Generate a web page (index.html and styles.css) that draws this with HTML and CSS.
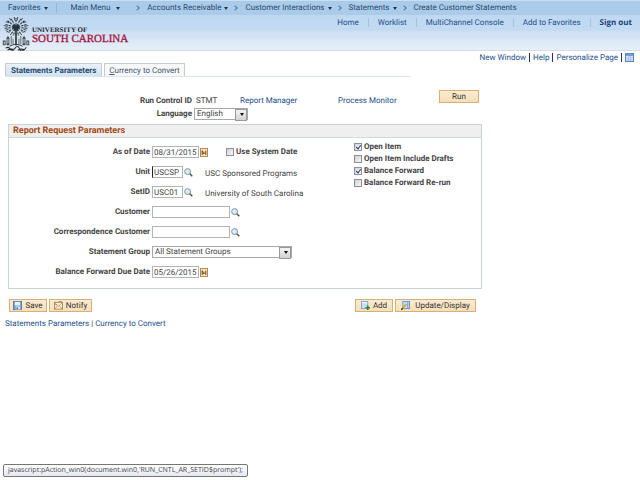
FILE: index.html
```html
<!DOCTYPE html>
<html lang="en">
<head>
    <meta charset="UTF-8">
    <meta name="viewport" content="width=device-width, initial-scale=1.0">
    <title>Create Customer Statements</title>
    <link rel="stylesheet" href="styles.css">
</head>
<body>
    <!-- shared icons -->
    <svg class="sprite" aria-hidden="true">
        <symbol id="lookup" viewBox="0 0 10 10">
            <path d="M6.2 6.2 L9.2 9.2" stroke="#5c5230" stroke-width="1.6"/>
            <circle cx="4" cy="4" r="3.3" fill="#d3ebf8" stroke="#71889c" stroke-width="1"/>
            <path d="M2.6 3.6 Q3 2.5 4.2 2.5" fill="none" stroke="#fff" stroke-width=".8"/>
        </symbol>
        <symbol id="calendar" viewBox="0 0 8 9">
            <rect x=".5" y=".5" width="7" height="8" fill="#f7e3bd" stroke="#b58a55"/>
            <path d="M2.2 2.5V6.8M5.8 2.5V6.8M2.2 3L5.6 6M2.2 5.5H4" fill="none" stroke="#59391e" stroke-width=".9"/>
        </symbol>
    </svg>

    <header class="header">
        <nav class="crumbs">
            <a class="crumb menu favorites" href="#">Favorites</a>
            <a class="crumb menu main-menu" href="#">Main Menu</a>
            <span class="chevron"></span>
            <a class="crumb menu" href="#">Accounts Receivable</a>
            <span class="chevron"></span>
            <a class="crumb menu" href="#">Customer Interactions</a>
            <span class="chevron"></span>
            <a class="crumb menu" href="#">Statements</a>
            <span class="chevron"></span>
            <a class="crumb" href="#">Create Customer Statements</a>
        </nav>
        <div class="banner">
            <div class="logo">
                <svg class="tree" viewBox="0 0 28 36" aria-hidden="true">
                    <g fill="none" stroke="#2b3237">
                        <path d="M13.500 12V30M14.500 12V30" stroke-width=".9"/>
                        <path d="M14 11V1M14 11L9 2M14 11L19 2M14 11L5 4M14 11L23 4M14 11L3 8M14 11L25 8M14 11L2 12M14 11L26 12M14 11L4 16M14 11L24 16M14 11L8 19M14 11L20 19M14 11L11 20M14 11L17 20" stroke-width="1.1" stroke-dasharray="4.500 1.200 2.500 .7"/>
                        <path d="M7 1L9 4M12 0L13 4M16 0L15 4M21 1L19 4M3 5L7 6M25 5L21 6M1 9L5 10M27 9L23 10M3 14L6 13M25 14L22 13M6 17L8 15M22 17L20 15" stroke-width=".9"/>
                        <path d="M7 31Q14 27 21 31" stroke-width="1"/>
                        <path d="M3 33Q6 31 8 34T13 33T18 34T25 32M5 35Q9 33 12 35M16 35Q20 33 23 35" stroke-width="1.1"/>
                    </g>
                    <g fill="#3d444a">
                        <path d="M4 22L5.500 20L7 22V30H4ZM21 22L22.500 20L24 22V30H21Z"/>
                        <path d="M0 25H3V30H0ZM25 25H28V30H25ZM8.500 20H9.300V29H8.500ZM18.700 20H19.500V29H18.700ZM10.500 23H11.300V29H10.500ZM16.700 23H17.500V29H16.700Z"/>
                    </g>
                    <path d="M5.500 23V28M22.500 23V28M1.500 26V29M26.500 26V29" stroke="#dbe7f6" stroke-width="1"/>
                </svg>
                <div class="wordmark">
                    <span class="wordmark-top">UNIVERSITY OF</span>
                    <span class="wordmark-name">SOUTH CAROLINA</span>
                </div>
            </div>
            <nav class="tools">
                <a href="#">Home</a>
                <a href="#">Worklist</a>
                <a href="#">MultiChannel Console</a>
                <a href="#">Add to Favorites</a>
                <a class="sign-out" href="#">Sign out</a>
            </nav>
        </div>
    </header>

    <nav class="page-links">
        <a href="#">New Window</a>
        <a href="#">Help</a>
        <a href="#">Personalize Page</a>
        <a href="#" aria-label="http">
            <svg class="grid-icon" viewBox="0 0 9 9" aria-hidden="true">
                <rect x=".5" y=".5" width="8" height="8" fill="#d5e4f7" stroke="#5b86c4"/>
                <path d="M1 2H8" stroke="#5b86c4" stroke-width="1.5"/>
                <path d="M3.500 3V8M5.500 3V8M1 5H8M1 7H8" stroke="#9bbbe4" stroke-width=".6"/>
            </svg>
        </a>
    </nav>

    <main class="page">
        <div class="tabs">
            <button class="tab active" type="button">Statements Parameters</button>
            <button class="tab" type="button"><u>C</u>urrency to Convert</button>
        </div>

        <form class="content">
            <div class="run">
                <div class="run-fields">
                    <div class="run-row">
                        <span class="run-label">Run Control ID</span>
                        <span class="run-id">STMT</span>
                        <a class="report" href="#">Report Manager</a>
                        <a href="#">Process Monitor</a>
                    </div>
                    <div class="run-row">
                        <label class="run-label" for="language">Language</label>
                        <span class="select language"><select id="language"><option>English</option></select></span>
                    </div>
                </div>
                <button class="btn run-btn" type="button">Run</button>
            </div>

            <section class="panel">
                <h2>Report Request Parameters</h2>
                <div class="panel-body">
                    <div class="fields">
                        <div class="field">
                            <label for="as-of">As of Date</label>
                            <input class="text date" id="as-of" type="text" value="08/31/2015">
                            <svg class="cal"><use href="#calendar"/></svg>
                            <span class="check system-date"><input type="checkbox" id="sysdate"><label for="sysdate">Use System Date</label></span>
                        </div>
                        <div class="field">
                            <label for="unit">Unit</label>
                            <input class="text code focused" id="unit" type="text" value="USCSP">
                            <svg class="look"><use href="#lookup"/></svg>
                            <span class="desc">USC Sponsored Programs</span>
                        </div>
                        <div class="field">
                            <label for="setid">SetID</label>
                            <input class="text code" id="setid" type="text" value="USC01">
                            <svg class="look"><use href="#lookup"/></svg>
                            <span class="desc">University of South Carolina</span>
                        </div>
                        <div class="field">
                            <label for="customer">Customer</label>
                            <input class="text wide" id="customer" type="text">
                            <svg class="look"><use href="#lookup"/></svg>
                        </div>
                        <div class="field">
                            <label for="corr">Correspondence Customer</label>
                            <input class="text wide" id="corr" type="text">
                            <svg class="look"><use href="#lookup"/></svg>
                        </div>
                        <div class="field">
                            <label for="group">Statement Group</label>
                            <span class="select group"><select id="group"><option>All Statement Groups</option></select></span>
                        </div>
                        <div class="field">
                            <label for="due">Balance Forward Due Date</label>
                            <input class="text date" id="due" type="text" value="05/26/2015">
                            <svg class="cal"><use href="#calendar"/></svg>
                        </div>
                    </div>
                    <div class="options">
                        <span class="check"><input type="checkbox" id="open" checked><label for="open">Open Item</label></span>
                        <span class="check"><input type="checkbox" id="drafts"><label for="drafts">Open Item Include Drafts</label></span>
                        <span class="check"><input type="checkbox" id="forward" checked><label for="forward">Balance Forward</label></span>
                        <span class="check"><input type="checkbox" id="rerun"><label for="rerun">Balance Forward Re-run</label></span>
                    </div>
                </div>
            </section>

            <div class="actions">
                <button class="btn save" type="button">
                    <svg viewBox="0 0 10 10" aria-hidden="true">
                        <rect x=".5" y=".5" width="9" height="9" fill="#6d9bd6" stroke="#4d7cb9"/>
                        <rect x="2" y="1" width="6" height="4" fill="#e8f1fb"/>
                        <rect x="3" y="6" width="5" height="3.500" fill="#dce9f8"/>
                        <rect x="4" y="7" width="1.500" height="2.500" fill="#3e6daa"/>
                    </svg>
                    Save
                </button>
                <button class="btn notify" type="button">
                    <svg viewBox="0 0 10 10" aria-hidden="true">
                        <rect x=".5" y="1.500" width="9" height="7.500" fill="#fbf1d8" stroke="#ad8350"/>
                        <path d="M1 2L5 6L9 2M1 9L4 5M9 9L6 5" fill="none" stroke="#ad8350" stroke-width=".8"/>
                        <path d="M5 1L9 0" stroke="#6a9a45"/>
                        <path d="M1.500 4H3" stroke="#c0504d"/>
                    </svg>
                    Notify
                </button>
                <button class="btn add" type="button">
                    <svg viewBox="0 0 10 10" aria-hidden="true">
                        <rect x=".5" y=".5" width="7" height="8" fill="#c9def6" stroke="#7ba3d8"/>
                        <path d="M1 2H7" stroke="#fff"/>
                        <path d="M7.500 5V10M5 7.500H10" stroke="#278a2d" stroke-width="1.800"/>
                    </svg>
                    Add
                </button>
                <button class="btn update" type="button">
                    <svg viewBox="0 0 10 10" aria-hidden="true">
                        <rect x="2" y=".5" width="7.500" height="8" fill="#c9def6" stroke="#6292d0"/>
                        <path d="M7.500 1.500V8" stroke="#6292d0"/>
                        <path d="M1 9L6 3.500" stroke="#d8a928" stroke-width="2"/>
                        <path d="M0 10L2 8" stroke="#4f3a1c" stroke-width="1.500"/>
                    </svg>
                    Update/Display
                </button>
            </div>
        </form>

        <nav class="footer-links"><a href="#">Statements Parameters</a> | <a href="#">Currency to Convert</a></nav>
    </main>

    <div class="status">javascript:pAction_win0(document.win0,'RUN_CNTL_AR_SETID$prompt');</div>
</body>
</html>
```

FILE: styles.css
```css
* {
    box-sizing: border-box;
}

body {
    margin: 0;
    min-height: 100vh;
    background: #fff;
    color: #444;
    font-family: Roboto, "Liberation Sans", Arial, sans-serif;
    font-size: 8px;
    line-height: 10px;
    text-rendering: geometricPrecision;
}

a {
    color: #1c4f8c;
    text-decoration: none;
}

button,
input,
select {
    font: inherit;
    color: inherit;
    margin: 0;
    text-rendering: inherit;
}

svg {
    display: block;
    flex: none;
}

.sprite {
    position: absolute;
    width: 0;
    height: 0;
}

/* header */
.header {
    height: 51px;
    border-bottom: 1px solid #d5dce6;
    background: linear-gradient(#bdd7f0 0, #c2daf2 30px, #d0e1f3 32px, #d3e3f4 38px, #dce8f6 40px, #e6eff9 50px);
}

.crumbs {
    display: flex;
    align-items: center;
    height: 15px;
    padding-left: 8px;
    border-top: 1px solid #c9dff3;
    background: #aacbe9;
    white-space: nowrap;
}

.crumb {
    display: flex;
    align-items: center;
    color: #2b4a6b;
}

.menu::after {
    content: "";
    margin-left: 3px;
    border: 2px solid transparent;
    border-top: 3px solid #26323f;
    border-bottom: 0;
}

.favorites {
    padding-right: 8px;
    border-right: 1px solid #93b7d9;
    margin-right: 14px;
}

.main-menu::after {
    margin-left: 6px;
}

.chevron {
    width: 4px;
    height: 4px;
    margin: 0 8px 0 5px;
    border-top: 1px solid #55789c;
    border-right: 1px solid #55789c;
    transform: rotate(45deg);
}

.main-menu + .chevron {
    margin-left: 15px;
}

.banner {
    display: flex;
    justify-content: space-between;
    align-items: flex-start;
    padding: 2px 8px 0 2px;
}

.logo {
    display: flex;
    gap: 2px;
}

.tree {
    width: 28px;
    height: 34px;
}

.wordmark {
    padding-top: 9px;
    font-family: "Liberation Serif", "Times New Roman", serif;
    white-space: nowrap;
}

.wordmark-top,
.wordmark-name {
    display: block;
}

.wordmark-top {
    color: #1f2933;
    font-size: 7px;
    font-weight: bold;
    line-height: 8px;
}

.wordmark-name {
    color: #a3123b;
    font-size: 11px;
    line-height: 11px;
    -webkit-text-stroke: 0.3px #a3123b;
}

.tools {
    display: flex;
    align-items: center;
    padding-top: 1px;
    white-space: nowrap;
}

.tools a {
    padding: 0 9px;
    border-left: 1px solid #a9c2dc;
    line-height: 9px;
}

.tools a:first-child {
    border-left: 0;
}

.tools .sign-out {
    padding-right: 0;
    color: #16407c;
    font-family: "Open Sans", sans-serif;
    font-weight: bold;
}

/* links under the header */
.page-links {
    display: flex;
    justify-content: flex-end;
    align-items: center;
    height: 12px;
    padding: 1px 6px 0 0;
}

.page-links a {
    padding: 0 3px;
    border-left: 1px solid #2b2f6c;
    line-height: 9px;
}

.page-links a:first-child {
    border-left: 0;
}

.page-links a:last-child {
    padding-right: 0;
}

.grid-icon {
    width: 9px;
    height: 9px;
}

/* tabs */
.page {
    padding-left: 5px;
}

.tabs {
    display: flex;
    gap: 2px;
    max-width: 405px;
    border-bottom: 1px solid #d3e7f1;
}

.tab {
    height: 13px;
    padding: 0 4px;
    border: 1px solid #c3cbd3;
    border-bottom: 0;
    background: #f7f8fa;
    color: #44566a;
    line-height: 11px;
    white-space: nowrap;
}

.tab.active {
    padding: 0 5px;
    background: linear-gradient(#eaf2fa, #d3e2f1);
    color: #24476e;
    font-weight: bold;
}

/* run control */
.content {
    max-width: 477px;
}

.run {
    display: flex;
    justify-content: space-between;
    align-items: flex-start;
    padding: 13px 3px 4px 0;
}

.run-fields {
    padding-top: 4px;
}

.run-row {
    display: flex;
    align-items: center;
    gap: 2px;
    height: 13px;
}

.run-label {
    width: 187px;
    font-weight: bold;
    text-align: right;
}

.run-id {
    width: 44px;
    padding-left: 2px;
}

.report {
    width: 96px;
}

.btn {
    display: flex;
    align-items: center;
    justify-content: center;
    gap: 3px;
    height: 13px;
    padding: 0 2px;
    border: 1px solid #d9ae79;
    background: linear-gradient(#fcecd0, #f6dfb9);
    color: #333;
    line-height: 10px;
}

.btn svg {
    width: 9px;
    height: 9px;
}

.run-btn {
    width: 40px;
}

/* drop-downs */
.select {
    position: relative;
    display: block;
}

.select select {
    display: block;
    width: 100%;
    height: 12px;
    padding: 0 12px 0 2px;
    border: 1px solid #a5a9ad;
    border-radius: 0;
    background: #fff;
    appearance: none;
    line-height: 10px;
}

.select::before {
    content: "";
    position: absolute;
    top: 1px;
    right: 1px;
    width: 10px;
    height: 10px;
    border: 1px solid #9a9a9a;
    background: linear-gradient(#f4f4f4, #d2d2d2);
    pointer-events: none;
}

.select::after {
    content: "";
    position: absolute;
    top: 5px;
    right: 4px;
    border: 2px solid transparent;
    border-top: 3px solid #111;
    border-bottom: 0;
    pointer-events: none;
}

.language {
    width: 54px;
}

.group {
    width: 140px;
}

/* parameters panel */
.panel {
    margin-left: 3px;
    border: 1px solid #c9d3d6;
}

.panel h2 {
    height: 13px;
    margin: 0;
    padding-left: 4px;
    border-bottom: 1px solid #ccdbe0;
    background: #efefef;
    color: #a34a12;
    font-size: 9px;
    line-height: 12px;
}

.panel-body {
    display: flex;
    padding-bottom: 6px;
}

.fields {
    width: 345px;
    padding-top: 4px;
}

.field {
    display: flex;
    align-items: center;
    height: 20px;
}

.field > label {
    width: 141px;
    margin-right: 2px;
    font-weight: bold;
    text-align: right;
}

.text {
    height: 12px;
    padding: 0 0 0 1px;
    border: 1px solid #b4b4b4;
    background: #fff;
    line-height: 10px;
}

.date {
    width: 47px;
}

.code {
    width: 31px;
}

.wide {
    width: 78px;
}

.focused {
    border-left-color: #222;
}

.cal {
    width: 8px;
    height: 9px;
    margin-left: 1px;
}

.look {
    width: 9px;
    height: 9px;
    margin-left: 1px;
}

.desc {
    padding: 3px 0 0 12px;
    white-space: nowrap;
}

.options {
    padding-top: 3px;
}

.check {
    display: flex;
    align-items: center;
    gap: 2px;
    height: 12px;
    font-weight: bold;
    white-space: nowrap;
}

.check input {
    position: relative;
    width: 8px;
    height: 8px;
    border: 1px solid #8e9298;
    background: linear-gradient(135deg, #cfd0d3, #f8f8f8);
    appearance: none;
}

.check input:checked::after {
    content: "";
    position: absolute;
    top: 0;
    left: 2px;
    width: 2px;
    height: 4px;
    border: solid #24408c;
    border-width: 0 1px 1px 0;
    box-sizing: content-box;
    transform: rotate(40deg);
}

.system-date {
    margin-left: 18px;
}

/* buttons under the panel */
.actions {
    display: flex;
    gap: 2px;
    padding: 10px 6px 0 4px;
}

.save,
.add {
    width: 38px;
}

.notify {
    width: 43px;
}

.add {
    margin-left: auto;
}

.update {
    width: 81px;
    gap: 5px;
}

.footer-links {
    padding-top: 7px;
}

.status {
    position: absolute;
    bottom: 3px;
    left: 3px;
    height: 13px;
    padding: 0 4px;
    border: 1px solid #767676;
    border-radius: 2px;
    background: linear-gradient(#fff, #e6e8f0);
    color: #444;
    font-family: "Open Sans", sans-serif;
    font-size: 7px;
    line-height: 11px;
    white-space: nowrap;
}
```
